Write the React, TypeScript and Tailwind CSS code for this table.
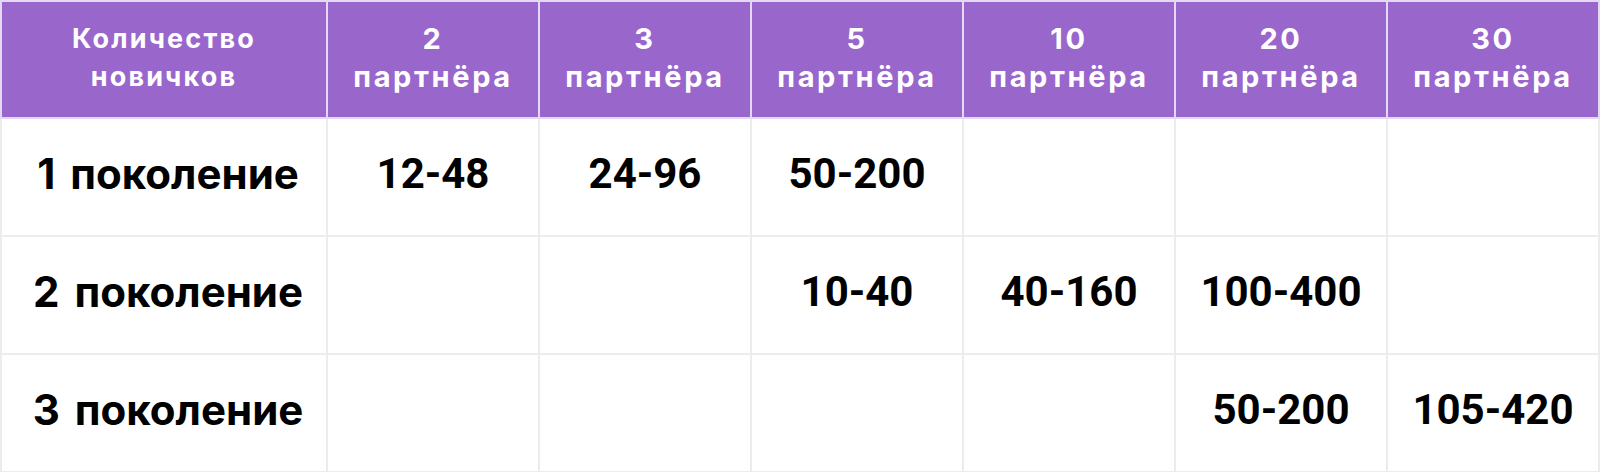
import React from 'react';

const columns = ['2', '3', '5', '10', '20', '30'];

const rows: { num: string; values: string[] }[] = [
  { num: '1', values: ['12-48', '24-96', '50-200', '', '', ''] },
  { num: '2', values: ['', '', '10-40', '40-160', '100-400', ''] },
  { num: '3', values: ['', '', '', '', '50-200', '105-420'] },
];

export default function App() {
  return (
    <div className="w-[1600px] h-[472px] bg-white">
      <table className="w-full h-full table-fixed border-collapse">
        <colgroup>
          <col className="w-[326px]" />
          {columns.map((c) => (
            <col key={c} className="w-[212px]" />
          ))}
        </colgroup>
        <thead>
          {/* Header */}
          <tr className="h-[117px] bg-[#9966cc]">
            <th className="border-2 border-[#e4d8f2] p-0 pb-1 align-middle font-['Inter',sans-serif] text-[27px] font-bold leading-[38px] tracking-[0.08em] text-white">
              Количество
              <br />
              новичков
            </th>
            {columns.map((c) => (
              <th
                key={c}
                className="border-2 border-[#e4d8f2] p-0 pb-1 align-middle font-['Inter',sans-serif] text-[29px] font-bold leading-[38px] tracking-[0.09em] text-white"
              >
                {c}
                <br />
                партнёра
              </th>
            ))}
          </tr>
        </thead>
        <tbody>
          {rows.map((row) => (
            <tr key={row.num} className="h-[118px]">
              <td className="border-2 border-[#ececec] p-0 pb-2 pl-[8px] text-center align-middle font-['Inter',sans-serif] text-[42px] font-bold text-black">
                <span className="mr-[15px]">{row.num}</span>поколение
              </td>
              {row.values.map((v, i) => (
                <td
                  key={i}
                  className="border-2 border-[#ececec] p-0 pb-2 text-center align-middle font-['Roboto',sans-serif] text-[42px] font-bold text-black"
                >
                  {v}
                </td>
              ))}
            </tr>
          ))}
        </tbody>
      </table>
    </div>
  );
}
